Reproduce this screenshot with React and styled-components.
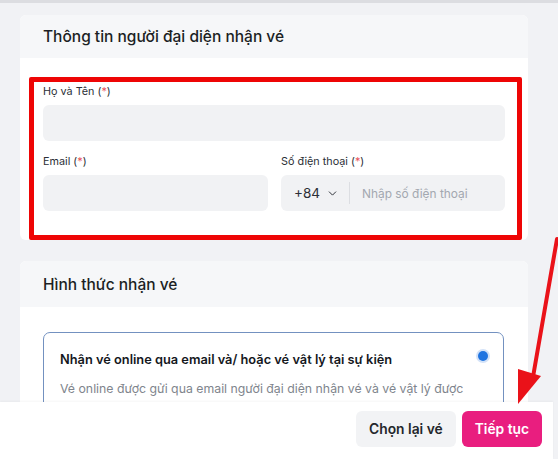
import React from "react";
import styled, { createGlobalStyle } from "styled-components";
import { ChevronDown } from "lucide-react";

const GlobalStyle = createGlobalStyle`
  * { box-sizing: border-box; }
  html, body { margin: 0; padding: 0; }
  body {
    background: #f1f2f5;
    font-family: Inter, "Noto Sans", sans-serif;
    color: #1f2329;
  }
`;

const Page = styled.div`
  position: relative;
  height: 459px;
  overflow: hidden;
  border-top: 3px solid #dcdde1;
`;

const Column = styled.div`
  width: 508px;
  margin-left: 20px;
  padding-top: 12px;
  display: flex;
  flex-direction: column;
  gap: 21px;
`;

const Card = styled.section`
  background: #fff;
  border-radius: 6px;
  overflow: hidden;
`;

const CardHeader = styled.div`
  height: ${(p) => p.$h || 43}px;
  background: #f6f7f9;
  display: flex;
  align-items: center;
  padding: 0 23px;
  font-size: 15.5px;
  font-weight: 500;
  color: #1c1f24;
`;

const CardBody = styled.div`
  padding: ${(p) => p.$pad};
`;

/* annotation frame drawn around the contact fields */
const RedFrame = styled.div`
  border: 5px solid #ee0505;
  border-radius: 2px;
  padding: 3px 12px 24px 9px;
  display: flex;
  flex-direction: column;
  gap: 14px;
`;

const Field = styled.div`
  display: flex;
  flex-direction: column;
  gap: 6px;
`;

const Label = styled.label`
  font-size: 10.8px;
  line-height: 14px;
  color: #2b2f36;
  span { color: #e8505b; }
`;

const Input = styled.div`
  height: 36px;
  border-radius: 6px;
  background: #f1f2f4;
  display: flex;
  align-items: center;
  font-size: 13px;
`;

const Row = styled.div`
  display: grid;
  grid-template-columns: 225px 224px;
  column-gap: 13px;
`;

const Prefix = styled.div`
  display: flex;
  align-items: center;
  gap: 6px;
  padding: 0 10px 0 13px;
  height: 22px;
  border-right: 1px solid #dcdee2;
  color: #2b2f36;
  font-size: 13.5px;
`;

const Placeholder = styled.span`
  padding-left: 12px;
  color: #a3a8b0;
  font-size: 11.9px;
`;

const Option = styled.div`
  border: 1.5px solid #7391c0;
  border-radius: 7px;
  padding: 17px 14px 14px 16px;
  height: 110px;
`;

const OptionTop = styled.div`
  display: flex;
  justify-content: space-between;
  align-items: flex-start;
`;

const OptionTitle = styled.div`
  font-size: 12.8px;
  font-weight: 600;
  color: #15181d;
  line-height: 18px;
  margin-top: 1px;
`;

const Radio = styled.span`
  width: 10px;
  height: 10px;
  border-radius: 50%;
  background: #1f74e0;
  box-shadow: 0 0 0 2px #d3e2f8;
  margin: 1px 1px 0 0;
`;

const OptionText = styled.p`
  margin: 10px 0 0;
  font-size: 12.3px;
  line-height: 20px;
  color: #80858d;
`;

const Footer = styled.div`
  position: absolute;
  left: 0;
  bottom: 0;
  width: 553px;
  height: 57px;
  background: #fff;
  box-shadow: 0 -1px 2px rgba(0, 0, 0, 0.04);
  display: flex;
  justify-content: flex-end;
  align-items: center;
  gap: 6px;
  padding: 0 11px 4px 0;
`;

const Button = styled.button`
  height: 36px;
  border: none;
  border-radius: 6px;
  font-family: inherit;
  font-size: 13.8px;
  font-weight: 600;
  padding: 0 13px;
  background: ${(p) => (p.$primary ? "#e91e7f" : "#f2f3f5")};
  color: ${(p) => (p.$primary ? "#fff" : "#24272c")};
`;

const Overlay = styled.svg`
  position: absolute;
  inset: 0;
  pointer-events: none;
`;

const Req = () => (
  <>
    {" ("}
    <span>*</span>
    {")"}
  </>
);

export default function App() {
  return (
    <>
      <GlobalStyle />
      <Page>
        <Column>
          <Card>
            <CardHeader>Thông tin người đại diện nhận vé</CardHeader>
            <CardBody $pad="19px 6px 0 9px">
              <RedFrame>
                <Field>
                  <Label>
                    Họ và Tên
                    <Req />
                  </Label>
                  <Input />
                </Field>
                <Row>
                  <Field>
                    <Label>
                      Email
                      <Req />
                    </Label>
                    <Input />
                  </Field>
                  <Field>
                    <Label>
                      Số điện thoại
                      <Req />
                    </Label>
                    <Input>
                      <Prefix>
                        +84 <ChevronDown size={13} strokeWidth={1.8} />
                      </Prefix>
                      <Placeholder>Nhập số điện thoại</Placeholder>
                    </Input>
                  </Field>
                </Row>
              </RedFrame>
            </CardBody>
          </Card>

          <Card>
            <CardHeader $h={46}>Hình thức nhận vé</CardHeader>
            <CardBody $pad="25px 24px 20px 23px">
              <Option>
                <OptionTop>
                  <OptionTitle>
                    Nhận vé online qua email và/ hoặc vé vật lý tại sự kiện
                  </OptionTitle>
                  <Radio />
                </OptionTop>
                <OptionText>
                  Vé online được gửi qua email người đại diện nhận vé và vé vật lý được
                </OptionText>
              </Option>
            </CardBody>
          </Card>
        </Column>

        <Footer>
          <Button>Chọn lại vé</Button>
          <Button $primary>Tiếp tục</Button>
        </Footer>

        <Overlay width="558" height="459" viewBox="0 0 558 459">
          <line
            x1="557"
            y1="236"
            x2="533"
            y2="374"
            stroke="#ea1219"
            strokeWidth="4"
            strokeLinecap="round"
          />
          <polygon points="518,401 518,366 541,373" fill="#ea1219" />
        </Overlay>
      </Page>
    </>
  );
}
